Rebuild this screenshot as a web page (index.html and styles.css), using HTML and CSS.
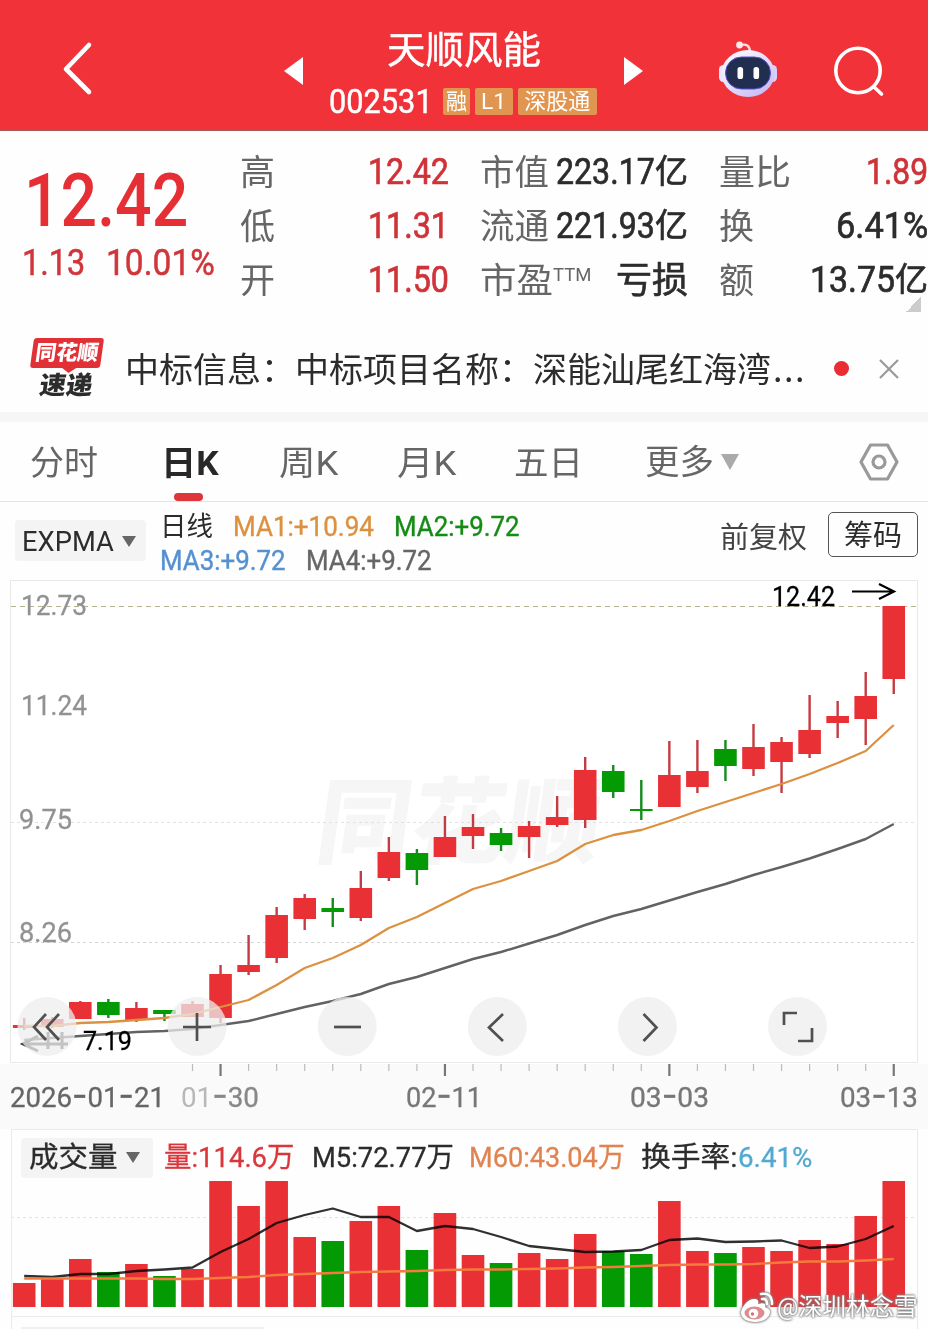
FILE: index.html
```html
<!DOCTYPE html>
<html lang="zh-CN">
<head>
<meta charset="utf-8">
<title>天顺风能 002531</title>
<link rel="stylesheet" href="styles.css">
</head>
<body>
<div class="app">
  <header class="top">
    <svg class="back" width="40" height="60" viewBox="0 0 40 60"><path d="M33 7 10 31l23 23" fill="none" stroke="#fff" stroke-width="4.6" stroke-linecap="round" stroke-linejoin="round"/></svg>
    <svg class="prev" width="20" height="30" viewBox="0 0 20 30"><path d="M0 15 19 1v28z" fill="#fff"/></svg>
    <div class="stock">
      <div class="stock-name"><span data-w="154">天顺风能</span></div>
      <div class="stock-sub"><span class="code" data-w="104">002531</span><i class="tag" style="width:27px"><span data-w="21">融</span></i><i class="tag" style="width:38px"><span data-w="25">L1</span></i><i class="tag" style="width:79px"><span data-w="66">深股通</span></i></div>
    </div>
    <svg class="next" width="20" height="30" viewBox="0 0 20 30"><path d="M19 15 0 1v28z" fill="#fff"/></svg>
    <svg class="robot" width="62" height="58" viewBox="0 0 62 58">
      <defs><linearGradient id="shell" x1="0" y1="0" x2=".8" y2="1"><stop offset="0" stop-color="#fff"/><stop offset=".55" stop-color="#e3ddfb"/><stop offset="1" stop-color="#c5b9f6"/></linearGradient></defs>
      <path d="M24 5q8-2 9 6" fill="none" stroke="#ffdfe4" stroke-width="2.4"/><circle cx="22.500" cy="5" r="3.400" fill="#ffe9ec"/>
      <rect x="2" y="25" width="9" height="17" rx="4.500" fill="#e9e5fd"/><rect x="51" y="25" width="9" height="17" rx="4.500" fill="#d8d0fa"/>
      <ellipse cx="31" cy="33.500" rx="26.500" ry="23.500" fill="url(#shell)"/>
      <rect x="8.500" y="17" width="45" height="32" rx="16" fill="#222e50" stroke="#5a4fd0" stroke-width="1"/>
      <rect x="20.500" y="27" width="5.600" height="12" rx="2.600" fill="#fff"/><rect x="36.500" y="27" width="5.600" height="12" rx="2.600" fill="#fff"/>
    </svg>
    <svg class="search" width="52" height="52" viewBox="0 0 52 52"><g fill="none" stroke="#fff" stroke-width="3.600" stroke-linecap="round"><circle cx="25" cy="24.500" r="22.200"/><path d="m40.500 40.500 8 7.500"/></g></svg>
  </header>

  <section class="quote">
    <div class="price">
      <div class="last"><span data-w="164">12.42</span></div>
      <div class="change"><span data-w="63">1.13</span><span data-w="109">10.01%</span></div>
    </div>
    <div class="stats">
      <span class="lb">高</span><b class="red"><span data-w="81">12.42</span></b>
      <span class="lb"><span data-w="69">市值</span></span><b><span data-w="99">223.17</span><em>亿</em></b>
      <span class="lb"><span data-w="72">量比</span></span><b class="red"><span data-w="62">1.89</span></b>
      <span class="lb">低</span><b class="red"><span data-w="81">11.31</span></b>
      <span class="lb"><span data-w="69">流通</span></span><b><span data-w="99">221.93</span><em>亿</em></b>
      <span class="lb">换</span><b><span data-w="92">6.41%</span></b>
      <span class="lb">开</span><b class="red"><span data-w="81">11.50</span></b>
      <span class="lb"><span data-w="73">市盈</span><sup data-w="38">TTM</sup></span><b><em class="loss">亏损</em></b>
      <span class="lb">额</span><b><span data-w="85">13.75</span><em>亿</em></b>
    </div>
    <i class="fold"></i>
  </section>

  <section class="news">
    <div class="badge">
      <span class="badge-top"><span data-w="63">同花顺</span></span>
      <span class="badge-bottom"><span data-w="53">速递</span></span>
    </div>
    <div class="headline">中标信息：中标项目名称：深能汕尾红海湾<span class="dots">...</span></div>
    <i class="unread"></i>
    <svg class="close" width="22" height="22" viewBox="0 0 22 22"><path d="M2 2 20 20M20 2 2 20" stroke="#999" stroke-width="2.200"/></svg>
  </section>

  <nav class="tabs">
    <a style="width:131px"><span data-w="68">分时</span></a>
    <a class="on" style="width:118px"><span data-w="58">日K</span></a>
    <a style="width:118px"><span data-w="59">周K</span></a>
    <a style="width:117px"><span data-w="59">月K</span></a>
    <a style="width:131px"><span data-w="69">五日</span></a>
    <a class="more"><span data-w="69">更多</span><svg width="18" height="16" viewBox="0 0 18 16"><path d="M0 0h18L9 16z" fill="#aaa"/></svg></a>
    <svg class="gear" width="42" height="42" viewBox="0 0 42 42"><g fill="none" stroke="#999" stroke-width="3.200" stroke-linejoin="round"><path d="M12.500 4h17L39 21l-9.500 17h-17L3 21z"/><circle cx="21" cy="21" r="6"/></g></svg>
  </nav>

  <section class="legend">
    <div class="picker"><span data-w="92">EXPMA</span><svg width="14" height="11" viewBox="0 0 14 11"><path d="M0 0h14L7 11z" fill="#666"/></svg></div>
    <div class="ma">
      <div><span class="cn" data-w="53">日线</span><span class="c1" data-w="141">MA1:+10.94</span><span class="c2" data-w="126">MA2:+9.72</span></div>
      <div><span class="c3" data-w="126">MA3:+9.72</span><span class="c4" data-w="126">MA4:+9.72</span></div>
    </div>
    <div class="adjust"><span data-w="87">前复权</span></div>
    <div class="chips"><span data-w="58">筹码</span></div>
  </section>

  <svg class="kline" id="kline" width="928" height="549" viewBox="0 580 928 549"></svg>

  <section class="volume">
    <div class="volume-head">
      <div class="picker"><span data-w="89">成交量</span><svg width="14" height="11" viewBox="0 0 14 11"><path d="M0 0h14L7 11z" fill="#666"/></svg></div>
      <span class="v1" data-w="131">量:114.6万</span>
      <span class="v2" data-w="142">M5:72.77万</span>
      <span class="v3" data-w="156">M60:43.04万</span>
      <span class="v4" data-w="96">换手率:</span><span class="v5" data-w="74">6.41%</span>
    </div>
    <svg id="vol" width="904" height="134" viewBox="12 1178 904 134"></svg>
  </section>
  <section class="next-panel"><i></i></section>

  <div class="credit">
    <svg width="35" height="32" viewBox="0 0 35 32">
      <path d="M14 8C8 8 1 16 1 22c0 5 6 9 14 9 9 0 15-5 15-10 0-3-3-4-5-5 1-3 0-5-7-3 1-3 0-5-4-5z" fill="#fff"/>
      <ellipse cx="14.500" cy="22" rx="10" ry="6.500" fill="#dd8b8d"/><circle cx="13.500" cy="22.500" r="4.800" fill="#fff"/><circle cx="12.500" cy="23" r="1.700" fill="#d57073"/>
      <path d="M21 3q11-2 11 10M22 8q5-1 5 5" fill="none" stroke="#fff" stroke-width="2.600" stroke-linecap="round"/>
    </svg>
    <span data-w="141">@深圳林念雪</span>
  </div>
</div>
<script src="app.js"></script>
</body>
</html>
```
FILE: styles.css
```css
* { box-sizing: border-box; }
body { margin: 0; background: #fefefe; color: #2c2c2c; font-family: Roboto, "Noto Sans CJK SC", sans-serif; }
i, em { font-style: normal; }
svg { display: block; flex: none; }
.app { position: relative; width: 928px; height: 1329px; overflow: hidden; }
[data-w] { display: inline-block; white-space: nowrap; transform-origin: 0 50%; flex: none; }

.top { display: flex; height: 131px; background: #f13239; border-bottom: 1px solid #a5595c; color: #fff; }
.back { margin: 38px 0 0 56px; }
.prev { margin: 56px 0 0 188px; }
.stock { width: 320px; display: flex; flex-direction: column; align-items: center; }
.stock-name { height: 56px; margin-top: 22px; font-size: 38px; line-height: 56px; -webkit-text-stroke: .5px #fff; }
.stock-sub { display: flex; align-items: center; height: 40px; margin: 3px 2px 0 0; }
.code { font-size: 34px; line-height: 40px; margin-right: 10px; -webkit-text-stroke: .5px #fff; }
.tag { height: 27px; margin-right: 5px; background: #e09650; border-radius: 2px; display: flex; justify-content: center; align-items: center; font-size: 22px; line-height: 27px; }
.tag:last-child { margin-right: 0; }
.next { margin: 56px 0 0 0; }
.robot { margin: 40px 0 0 73px; }
.search { margin: 46px 0 0 54px; }

.quote { position: relative; display: flex; height: 199px; color: #2c2c2c; }
.price { width: 240px; color: #e52f35; padding-top: 29px; }
.last { padding-left: 24px; font-size: 75px; line-height: 80px; font-weight: 500; }
.change { display: flex; gap: 21px; padding-left: 22px; margin-top: 2px; font-size: 36px; line-height: 42px; color: #d0353a; -webkit-text-stroke: .5px currentColor; }
.stats { width: 688px; padding-top: 13px; display: grid; grid-template-columns: 60px 149px 31px 77px 131px 31px 60px 149px; grid-template-rows: repeat(3, 54px); }
.stats .lb, .stats b { display: flex; align-items: center; height: 54px; white-space: nowrap; }
.stats .lb { font-size: 35px; line-height: 50px; padding-top: 5px; color: #666; }
.stats b { justify-content: flex-end; font-size: 37px; font-weight: 400; -webkit-text-stroke: .7px currentColor; }
.stats > :nth-child(6n+1) { grid-column: 1; }
.stats > :nth-child(6n+2) { grid-column: 2; }
.stats > :nth-child(6n+3) { grid-column: 4; }
.stats > :nth-child(6n+4) { grid-column: 5; }
.stats > :nth-child(6n+5) { grid-column: 7; }
.stats > :nth-child(6n+6) { grid-column: 8; }
.stats em { font-size: 33px; line-height: 50px; padding-top: 2px; }
.stats em.loss { font-size: 36px; padding-top: 4px; }
.stats sup { font-size: 18px; line-height: 18px; margin-top: -14px; }
.stats .red { color: #cf3338; }
.fold { position: absolute; right: 7px; top: 166px; width: 15px; height: 15px; background: linear-gradient(135deg, transparent 50%, #ccc 50%); }

.news { display: flex; height: 82px; }
.badge { width: 73px; margin: 8px 0 0 30px; display: flex; flex-direction: column; align-items: center; font-weight: 900; }
.badge-top { width: 70px; height: 30px; background: #e13036; border-radius: 3px; transform: skewX(-8deg); color: #fff; font-size: 21px; line-height: 30px; display: flex; justify-content: center; }
.badge-bottom { transform: skewX(-8deg); font-size: 25px; line-height: 28px; height: 29px; margin-top: 1px; }
.badge-bottom::before { content: ""; display: block; width: 0; border: 7px solid transparent; border-bottom: 0; border-top: 5px solid #e13036; margin: -1px auto -1px; }
.headline { width: 699px; margin: 12px 0 0 22px; font-family: "Noto Sans CJK SC", sans-serif; font-size: 34px; line-height: 51px; white-space: nowrap; }
.dots { letter-spacing: 1.500px; margin-left: 2px; }
.unread { width: 15px; height: 15px; margin: 31px 0 0 10px; border-radius: 50%; background: #e92d33; flex: none; }
.close { margin: 28px 0 0 29px; }

.tabs { display: flex; height: 90px; border-top: 10px solid #f6f6f6; border-bottom: 1px solid #e5e5e5; padding-left: 30px; font-size: 34px; line-height: 82px; color: #666; }
.tabs a { position: relative; flex: none; height: 80px; }
.tabs .on { color: #282828; font-weight: 700; }
.tabs .on::after { content: ""; position: absolute; left: 13px; bottom: 1px; width: 29px; height: 8px; border-radius: 4px; background: #de343a; }
.tabs .more { display: flex; align-items: center; gap: 7px; width: 213px; }
.gear { margin-top: 19px; }

.legend { display: flex; height: 78px; }
.picker { display: flex; align-items: center; background: #f4f4f4; border-radius: 4px; gap: 8px; padding-left: 7px; }
.legend .picker { width: 131px; height: 41px; margin: 18px 0 0 15px; padding-top: 2px; font-size: 28.500px; }
.ma { width: 560px; margin: 8px 0 0 14px; font-size: 27.500px; line-height: 34px; }
.ma div { display: flex; gap: 20px; height: 34px; }
.ma .cn { font-size: 27px; }
.ma span:not(.cn) { -webkit-text-stroke: .4px currentColor; }
.c1 { color: #dc9140; } .c2 { color: #168b16; } .c3 { color: #5590d0; } .c4 { color: #666; }
.adjust { width: 108px; margin-top: 15px; font-size: 29px; line-height: 42px; color: #444; }
.chips { width: 90px; height: 45px; margin-top: 10px; border: 1px solid #555; border-radius: 5px; text-align: center; font-size: 29px; line-height: 47px; }

.kline { font-family: Roboto, sans-serif; }
.volume { width: 907px; height: 187px; margin-left: 11px; border: 1px solid #eaeaea; border-bottom: 0; }
.volume-head { display: flex; align-items: center; height: 48px; padding: 7px 0 0 9px; font-size: 28.500px; line-height: 40px; -webkit-text-stroke: .3px currentColor; }
.volume .picker { width: 132px; height: 40px; margin-right: 11px; padding-left: 8px; }
.v1 { color: #da363b; margin-right: 17px; } .v3 { color: #e18351; margin: 0 16px; } .v5 { color: #52a9d2; }
.next-panel { width: 907px; height: 14px; margin-left: 11px; border: 1px solid #eaeaea; border-bottom: 0; padding: 10px 0 0 9px; }
.next-panel i { display: block; width: 243px; height: 3px; background: #f1f1f1; }
.credit { position: absolute; left: 740px; top: 1290px; display: flex; align-items: center; height: 34px; color: #fff; font-size: 24px; line-height: 36px; gap: 2px; filter: drop-shadow(0 0 1px #777) drop-shadow(0 0 1px #888); }
```
FILE: app.js
```js
const RED = '#e93035', GREEN = '#049a04';
const X0 = 24.2, STEP = 28.05, BAR = 22.6;
const cx = i => X0 + STEP * i;

/* direction, body top, body bottom, wick top, wick bottom, volume top */
const days = [
  [1,1025,1028,1018,1030,1283],[1,1019,1027,1017,1028,1279],[1,1002,1019,1001,1019,1259],
  [0,1002,1015,999,1018,1272],[1,1008,1020,1002,1022,1264],[0,1010,1014,1010,1021,1276],
  [1,1004,1017,1001,1017,1269],[1,974,1018,965,1023,1181],[1,965,972,935,975,1206],
  [1,915,958,907,963,1181],[1,898,919,894,930,1237],[0,908,912,898,927,1241],
  [1,888,918,871,921,1221],[1,852,878,837,881,1206],[0,853,870,849,885,1250],
  [1,837,857,816,857,1213],[1,827,836,814,849,1255],[0,833,845,828,851,1263],
  [1,826,837,821,858,1253],[1,817,825,796,827,1259],[1,770,820,757,828,1234],
  [0,771,792,765,798,1251],[0,809,811,780,820,1254],[1,775,807,741,807,1201],
  [1,771,787,740,793,1251],[0,749,766,740,781,1253],[1,747,769,724,776,1247],
  [1,742,762,737,793,1251],[1,730,754,695,758,1240],[1,716,723,701,738,1244],
  [1,696,719,672,745,1216],[1,606,679,606,694,1181]];
const fast = [1026,1026,1023,1022,1020,1018,1014,1007,1000,985,968,958,945,928,917,903,889,881,871,861,844,835,830,821,811,802,793,784,774,763,751,725];
const slow = [1040,1038,1036,1034,1032,1031,1029,1025,1021,1014,1007,1001,994,984,977,968,959,952,943.5,935,925,916,909,900.5,892,884,875,867,858.5,849,839,824];
const m5 = [1276,1277,1274,1274,1271,1269.5,1267.5,1252,1239,1223,1215,1208.5,1217,1217,1231,1226,1229,1237,1246,1249,1252,1251.5,1250,1240,1238.5,1242,1241.5,1240.5,1248,1246.5,1239,1226];
const m60 = [1278.5,1278.5,1278.5,1278.5,1278.5,1279,1279,1278,1277,1275,1274,1273,1272,1271.5,1271,1270,1269.5,1269.5,1269,1268.5,1267.5,1267,1266,1265,1264.5,1264.5,1264,1262.5,1261.5,1261.5,1260.5,1259];

const line = (pts, color, w) => `<polyline points="${pts.map((y, i) => cx(i) + ',' + y).join(' ')}" fill="none" stroke="${color}" stroke-width="${w}" stroke-linejoin="round"/>`;
const label = (s, x, y, w, color, size = 28) => `<text x="${x}" y="${y}" font-size="${size}" fill="${color}" stroke="${color}" stroke-width=".3" textLength="${w}" lengthAdjust="spacingAndGlyphs">${s.replace(/-/g, '<tspan font-family="Inter" font-size="34">-</tspan>')}</text>`;
const grid = (y, color, dash) => `<path d="M11 ${y}H917" stroke="${color}" stroke-dasharray="${dash}"/>`;

let k = `<rect x="0" y="1064" width="928" height="65" fill="#fafafa"/>
<rect x="10.500" y="580.500" width="907" height="482" fill="#fff" stroke="#e9e9e9"/>
<text transform="translate(313 856) skewX(-8)" font-family="Noto Sans CJK SC" font-weight="900" font-size="94" fill="#f6f6f6" textLength="284" lengthAdjust="spacingAndGlyphs">同花顺</text>`;
k += grid(606.5, '#b8b28e', '5 4') + grid(822.5, '#e2e2e2', '3 3') + grid(942.5, '#d5d5d5', '3 3');
k += label('12.73', 21, 615, 66, '#929292') + label('11.24', 21, 715, 66, '#929292') + label('9.75', 19, 829, 53, '#929292') + label('8.26', 19, 942, 53, '#929292');
days.forEach(([up, t, b, h, l], i) => {
  const c = up ? RED : GREEN;
  k += `<rect x="${cx(i) - 1.2}" y="${h}" width="2.4" height="${l - h}" fill="${up ? '#c43c43' : '#158a1e'}"/><rect x="${cx(i) - BAR / 2}" y="${t}" width="${BAR}" height="${b - t}" fill="${c}"/>`;
});
k += line(slow, '#626262', 2.4) + line(fast, '#dc9140', 2.3);
k += label('12.42', 772, 606, 63, '#000', 27) + label('7.19', 83, 1050, 49, '#000', 26);
k += '<path d="M852 591.500H893M879 584l15 7.500-15 7.500" fill="none" stroke="#000" stroke-width="2.200"/>';
k += '<path d="M68 1044H23M38 1036l-15 8 15 7M48 1032v17M62 1032v17" fill="none" stroke="#444" stroke-width="3"/>';
const glyphs = [
  'M46 1014 34 1027l12 13M59 1014l-12 13 12 13', 'M183 1027h28M197 1013v28', 'M334 1027h27',
  'M503 1014l-14 13.500 14 13.500', 'M643.500 1014l13 13.500-13 13.500', 'M784 1025v-12h13M812 1028v13h-14'];
glyphs.forEach((d, i) => {
  k += `<circle cx="${47 + i * 150.1}" cy="1026.500" r="29.500" fill="#eeeeee" fill-opacity=".75"/><path d="${d}" fill="none" stroke="#505050" stroke-width="2.700"/>`;
});
for (let i = 6; i < 32; i++) {
  const major = i % 8 === 7;
  k += `<path d="M${cx(i)} 1064v${major ? 12 : 7}" stroke="${major ? '#777' : '#bbb'}" stroke-width="${major ? 2.200 : 1.200}"/>`;
}
k += label('2026-01-21', 10, 1107, 155, '#666') + label('<tspan fill="#b8b8b8" stroke="none">01</tspan>-30', 181, 1107, 78, '#888')
  + label('02-11', 406, 1107, 76, '#777') + label('03-03', 630, 1107, 79, '#777') + label('03-13', 840, 1107, 78, '#777');
document.getElementById('kline').innerHTML = k;

let v = grid(1217.5, '#e2e2e2', '3 3');
days.forEach((d, i) => { v += `<rect x="${cx(i) - BAR / 2}" y="${d[5]}" width="${BAR}" height="${1307 - d[5]}" fill="${d[0] ? RED : GREEN}"/>`; });
v += `<g style="mix-blend-mode:multiply">${line(m5, '#303030', 2.300)}</g>` + line(m60, '#f47b3d', 2.300);
document.getElementById('vol').innerHTML = v;

/* condense each label to its design width */
document.querySelectorAll('[data-w]').forEach(el => {
  const target = +el.dataset.w, base = el.offsetWidth;
  el.style.transform = `scaleX(${target / base})`;
  el.style.marginRight = (parseFloat(getComputedStyle(el).marginRight) + target - base) + 'px';
});
```
